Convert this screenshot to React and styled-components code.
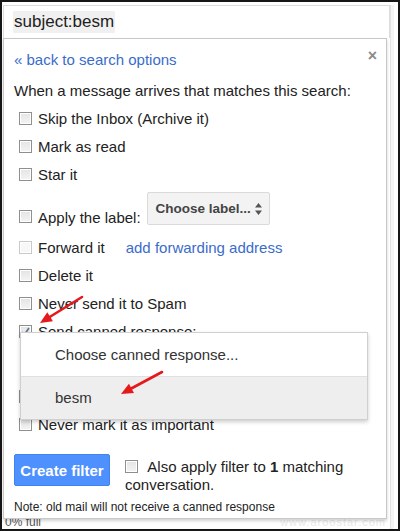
import React from 'react';
import styled, {createGlobalStyle} from "styled-components";

const GlobalStyle = createGlobalStyle`
  html, body {
    margin: 0;
    padding: 0;
    background: #fff;
  }
  body {
    font-family: "Liberation Sans", Arial, sans-serif;
    color: #222;
  }
`;

const Frame = styled.div`
  position: relative;
  box-sizing: border-box;
  width: 400px;
  height: 531px;
  border: 2px solid #161616;
  display: flex;
  overflow: hidden;
  background: #fff;
`;

const Main = styled.div`
  width: 387px;
  padding: 3px 0 0 1px;
  display: flex;
  flex-direction: column;
`;

const ScrollTrack = styled.div`
  flex: 1;
  margin-top: 3px;
  border-left: 1px solid #e2e2e2;
  background: linear-gradient(90deg, #f4f4f4 0 3px, #fff 3px);
`;

const SearchBox = styled.div`
  height: 33px;
  box-sizing: border-box;
  border: 1px solid #dcdcdc;
  border-bottom: none;
  display: flex;
  align-items: center;
  padding-left: 9px;
`;

const Query = styled.span`
  font-size: 17px;
  color: #1e1e1e;
  background: #f0f0f0;
  padding: 1px 1px;
`;

const Panel = styled.div`
  position: relative;
  box-sizing: border-box;
  width: 384px;
  height: 481px;
  border: 1px solid #c8c8c8;
  box-shadow: 0 2px 3px rgba(0, 0, 0, 0.18);
  padding: 10px 0 0 10px;
  display: flex;
  flex-direction: column;
`;

const Link = styled.a`
  color: #3a6ccb;
  text-decoration: none;
  font-size: 15px;
  cursor: pointer;
  margin-left: ${p => p.$gap || 0}px;
`;

const TopLine = styled.div`
  height: 20px;
  display: flex;
  align-items: center;
  justify-content: space-between;
  padding-right: 9px;
`;

const Close = styled.span`
  color: #8a8a8a;
  font-size: 16px;
  font-weight: bold;
  line-height: 1;
  margin-top: -6px;
`;

const Heading = styled.div`
  margin-top: 12px;
  height: 20px;
  line-height: 20px;
  font-size: 15px;
`;

const Rows = styled.div`
  margin-top: 3px;
  display: flex;
  flex-direction: column;
`;

const Row = styled.label`
  height: ${p => p.$h || 28}px;
  display: flex;
  align-items: ${p => (p.$h ? 'flex-end' : 'center')};
  font-size: 15px;
  padding-left: 5px;
  padding-bottom: ${p => (p.$h ? 7 : 0)}px;
  box-sizing: border-box;
  white-space: nowrap;
`;

const Box = styled.span`
  flex: none;
  box-sizing: border-box;
  width: 13px;
  height: 13px;
  margin-right: 6px;
  margin-bottom: ${p => (p.$low ? 3 : 0)}px;
  border: 1px solid ${p => (p.$faded ? '#c9c9c9' : '#8f8f8f')};
  box-shadow: inset 0 0 0 1px #fff;
  background: ${p => (p.$faded ? '#f7f7f7' : 'linear-gradient(#e4e4e4, #f4f4f4)')};
  display: inline-flex;
  align-items: center;
  justify-content: center;
`;

const LabelButton = styled.div`
  box-sizing: border-box;
  width: 123px;
  height: 33px;
  margin-left: 6px;
  margin-bottom: 1px;
  border: 1px solid #dadada;
  border-radius: 2px;
  background: #f3f3f3;
  display: flex;
  align-items: center;
  justify-content: space-between;
  padding: 0 6px 0 8px;
  font-size: 13.5px;
  font-weight: bold;
  color: #444;
  white-space: nowrap;
`;

const SelectStub = styled.div`
  height: 37px;
  padding-left: 9px;
`;

const StubBox = styled.div`
  width: 60px;
  height: 30px;
  margin-top: -2px;
  border-left: 2px solid #4d90fe;
`;

const Footer = styled.div`
  margin-top: 16px;
  display: flex;
  align-items: flex-start;
`;

const CreateButton = styled.button`
  width: 96px;
  height: 32px;
  border: 1px solid #3f83f3;
  border-radius: 2px;
  background: #4d90fe;
  color: #fff;
  font-family: inherit;
  font-size: 15px;
  font-weight: bold;
  padding: 0;
`;

const AlsoApply = styled.div`
  margin: 4px 0 0 15px;
  width: 240px;
  font-size: 15px;
  line-height: 18px;
  & > span {
    display: inline-block;
    vertical-align: -1px;
  }
`;

const Note = styled.div`
  margin-top: 5px;
  font-size: 12px;
  line-height: 16px;
  color: #222;
`;

const Below = styled.div`
  height: 9px;
  overflow: hidden;
  display: flex;
  justify-content: space-between;
  font-size: 12px;
  line-height: 6px;
  padding: 0 4px 0 2px;
  color: #555;
`;

const Watermark = styled.span`
  color: #e8e8e8;
  font-size: 11px;
  letter-spacing: 1px;
`;

const Menu = styled.div`
  position: absolute;
  left: 16px;
  top: 293px;
  width: 348px;
  height: 88px;
  box-sizing: border-box;
  background: #fff;
  border: 1px solid #cfcfcf;
  box-shadow: 0 2px 4px rgba(0, 0, 0, 0.2);
  display: flex;
  flex-direction: column;
`;

const MenuItem = styled.div`
  flex: 1;
  display: flex;
  align-items: center;
  padding-left: 34px;
  font-size: 15px;
  color: #333;
  background: ${p => (p.$active ? '#eeeeee' : '#fff')};
  border-top: ${p => (p.$split ? '1px solid #e0e0e0' : 'none')};
`;

const Overlay = styled.svg`
  position: absolute;
  left: -2px;
  top: -2px;
  pointer-events: none;
`;

const Check = () => (
    <svg width="11" height="11" viewBox="0 0 11 11">
        <path d="M2 6 L4.5 8.5 L9 2" stroke="#5a6f96" strokeWidth="1.6" fill="none"/>
    </svg>
);

const UpDown = () => (
    <svg width="9" height="14" viewBox="0 0 9 14">
        <path d="M4.5 1 L8 5.5 H1 Z M4.5 13 L8 8.5 H1 Z" fill="#555"/>
    </svg>
);

const Arrow = ({x1, y1, x2, y2}) => {
    const a = Math.atan2(y2 - y1, x2 - x1);
    const len = 13;
    const spread = 0.42;
    const p1 = [x2 - len * Math.cos(a - spread), y2 - len * Math.sin(a - spread)];
    const p2 = [x2 - len * Math.cos(a + spread), y2 - len * Math.sin(a + spread)];
    const bx = x2 - 9 * Math.cos(a);
    const by = y2 - 9 * Math.sin(a);
    return (
        <g>
            <line x1={x1} y1={y1} x2={bx} y2={by} stroke="#e5191b" strokeWidth="2.6" strokeLinecap="round"/>
            <polygon points={`${x2},${y2} ${p1[0]},${p1[1]} ${p2[0]},${p2[1]}`} fill="#e5191b"/>
        </g>
    );
};

const rows = [
    {text: 'Skip the Inbox (Archive it)'},
    {text: 'Mark as read'},
    {text: 'Star it'},
];

const rowsAfter = [
    {text: 'Delete it'},
    {text: 'Never send it to Spam'},
];

const App = () => {
    return (
        <Frame>
            <GlobalStyle/>
            <Main>
                <SearchBox>
                    <Query>subject:besm</Query>
                </SearchBox>
                <Panel>
                    <TopLine>
                        <Link>« back to search options</Link>
                        <Close>×</Close>
                    </TopLine>
                    <Heading>When a message arrives that matches this search:</Heading>
                    <Rows>
                        {rows.map((item, index) => (
                            <Row key={`row-${index}`}><Box/>{item.text}</Row>
                        ))}
                        <Row $h={45}>
                            <Box $low/>Apply the label:
                            <LabelButton>Choose label... <UpDown/></LabelButton>
                        </Row>
                        <Row>
                            <Box $faded/>Forward it
                            <Link $gap={21}>add forwarding address</Link>
                        </Row>
                        {rowsAfter.map((item, index) => (
                            <Row key={`row-after-${index}`}><Box/>{item.text}</Row>
                        ))}
                        <Row><Box><Check/></Box>Send canned response:</Row>
                        <SelectStub><StubBox/></SelectStub>
                        <Row><Box/>Always mark it as important</Row>
                        <Row><Box/>Never mark it as important</Row>
                    </Rows>
                    <Footer>
                        <CreateButton>Create filter</CreateButton>
                        <AlsoApply>
                            <Box/> Also apply filter to <b>1</b> matching conversation.
                        </AlsoApply>
                    </Footer>
                    <Note>Note: old mail will not receive a canned response</Note>
                    <Menu>
                        <MenuItem>Choose canned response...</MenuItem>
                        <MenuItem $active $split>besm</MenuItem>
                    </Menu>
                </Panel>
                <Below>
                    <span>0% full</span>
                    <Watermark>www.aroostar.com</Watermark>
                </Below>
            </Main>
            <ScrollTrack/>
            <Overlay width="400" height="531" viewBox="0 0 400 531">
                <Arrow x1={82} y1={297} x2={40} y2={323}/>
                <Arrow x1={162} y1={372} x2={121} y2={394}/>
            </Overlay>
        </Frame>
    );
};

export default App;
